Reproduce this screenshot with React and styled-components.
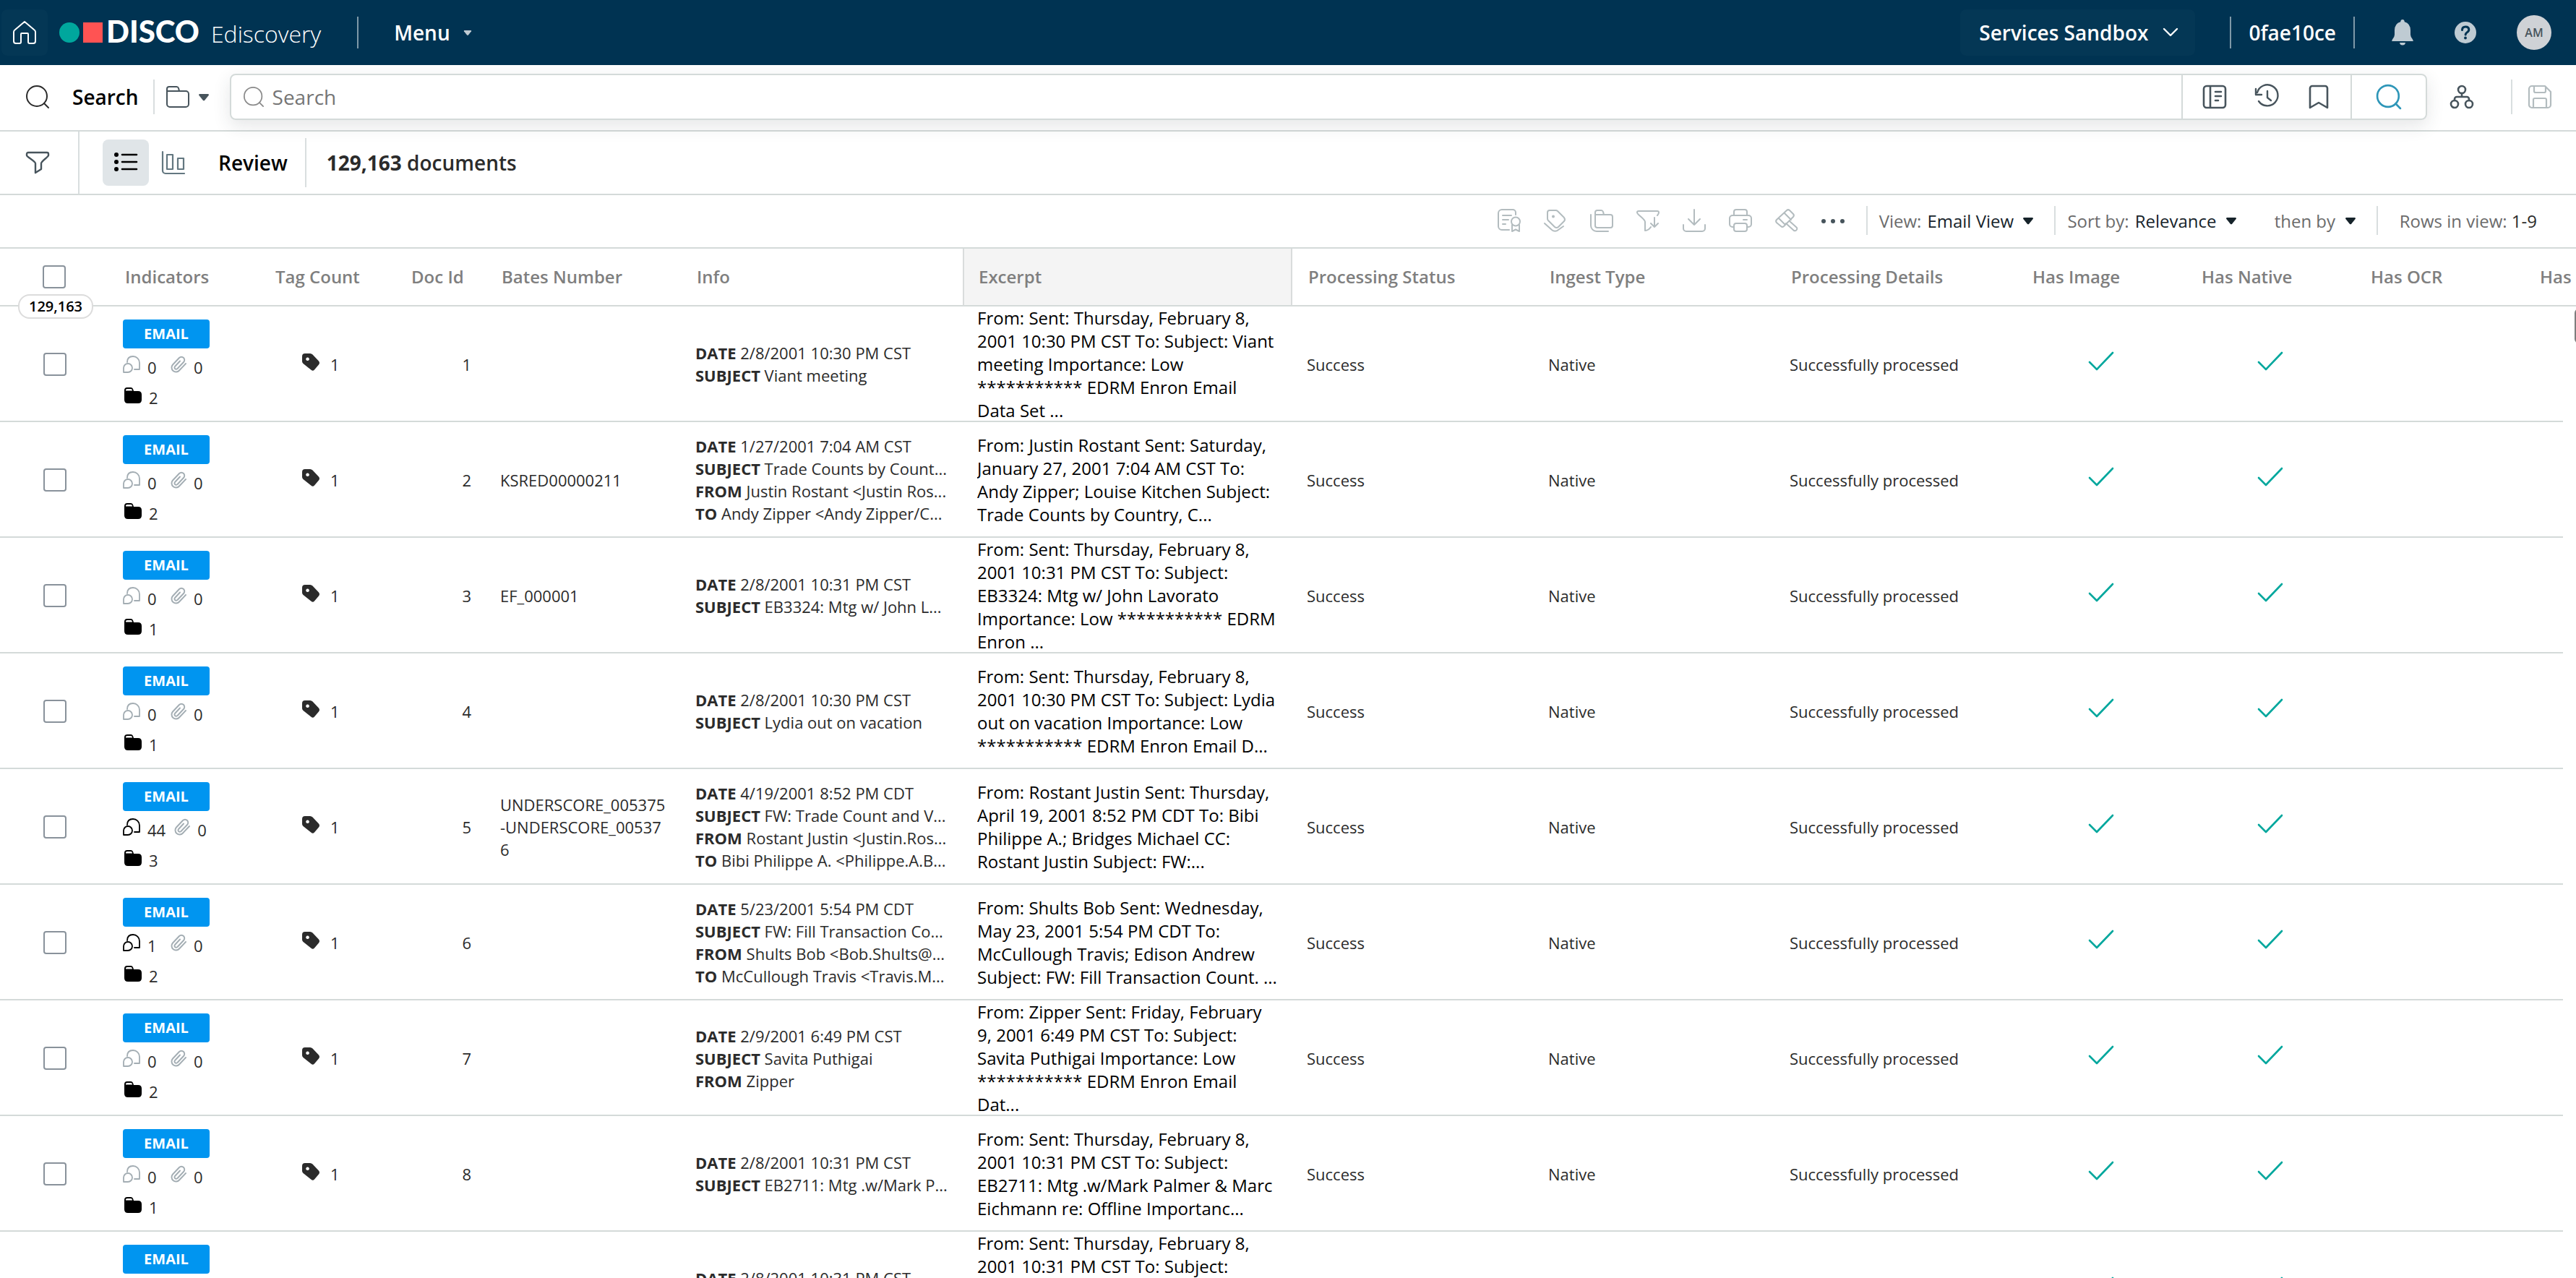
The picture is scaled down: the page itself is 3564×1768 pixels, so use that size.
import React, { useState } from "react";
import styled, { createGlobalStyle, css } from "styled-components";

const documents = [
    {
        id: 1, bates: "", threads: 0, attachments: 0, folders: 2,
        info: [["DATE", "2/8/2001 10:30 PM CST"], ["SUBJECT", "Viant meeting"]],
        excerpt: "From: Sent: Thursday, February 8, 2001 10:30 PM CST To: Subject: Viant meeting Importance: Low *********** EDRM Enron Email Data Set ...",
    },
    {
        id: 2, bates: "KSRED00000211", threads: 0, attachments: 0, folders: 2,
        info: [["DATE", "1/27/2001 7:04 AM CST"], ["SUBJECT", "Trade Counts by Count..."], ["FROM", "Justin Rostant <Justin Ros..."], ["TO", "Andy Zipper <Andy Zipper/C..."]],
        excerpt: "From: Justin Rostant Sent: Saturday, January 27, 2001 7:04 AM CST To: Andy Zipper; Louise Kitchen Subject: Trade Counts by Country, C...",
    },
    {
        id: 3, bates: "EF_000001", threads: 0, attachments: 0, folders: 1,
        info: [["DATE", "2/8/2001 10:31 PM CST"], ["SUBJECT", "EB3324: Mtg w/ John L..."]],
        excerpt: "From: Sent: Thursday, February 8, 2001 10:31 PM CST To: Subject: EB3324: Mtg w/ John Lavorato Importance: Low *********** EDRM Enron ...",
    },
    {
        id: 4, bates: "", threads: 0, attachments: 0, folders: 1,
        info: [["DATE", "2/8/2001 10:30 PM CST"], ["SUBJECT", "Lydia out on vacation"]],
        excerpt: "From: Sent: Thursday, February 8, 2001 10:30 PM CST To: Subject: Lydia out on vacation Importance: Low *********** EDRM Enron Email D...",
    },
    {
        id: 5, bates: "UNDERSCORE_005375-UNDERSCORE_005376", threads: 44, attachments: 0, folders: 3,
        info: [["DATE", "4/19/2001 8:52 PM CDT"], ["SUBJECT", "FW: Trade Count and V..."], ["FROM", "Rostant Justin <Justin.Ros..."], ["TO", "Bibi Philippe A. <Philippe.A.B..."]],
        excerpt: "From: Rostant Justin Sent: Thursday, April 19, 2001 8:52 PM CDT To: Bibi Philippe A.; Bridges Michael CC: Rostant Justin Subject: FW:...",
    },
    {
        id: 6, bates: "", threads: 1, attachments: 0, folders: 2,
        info: [["DATE", "5/23/2001 5:54 PM CDT"], ["SUBJECT", "FW: Fill Transaction Co..."], ["FROM", "Shults Bob <Bob.Shults@..."], ["TO", "McCullough Travis <Travis.M..."]],
        excerpt: "From: Shults Bob Sent: Wednesday, May 23, 2001 5:54 PM CDT To: McCullough Travis; Edison Andrew Subject: FW: Fill Transaction Count. ...",
    },
    {
        id: 7, bates: "", threads: 0, attachments: 0, folders: 2,
        info: [["DATE", "2/9/2001 6:49 PM CST"], ["SUBJECT", "Savita Puthigai"], ["FROM", "Zipper"]],
        excerpt: "From: Zipper Sent: Friday, February 9, 2001 6:49 PM CST To: Subject: Savita Puthigai Importance: Low *********** EDRM Enron Email Dat...",
    },
    {
        id: 8, bates: "", threads: 0, attachments: 0, folders: 1,
        info: [["DATE", "2/8/2001 10:31 PM CST"], ["SUBJECT", "EB2711: Mtg .w/Mark P..."]],
        excerpt: "From: Sent: Thursday, February 8, 2001 10:31 PM CST To: Subject: EB2711: Mtg .w/Mark Palmer & Marc Eichmann re: Offline Importanc...",
    },
    {
        id: 9, bates: "", threads: 0, attachments: 0, folders: 1,
        info: [["DATE", "2/8/2001 10:31 PM CST"], ["SUBJECT", "EB3324: Mtg w/ John L..."]],
        excerpt: "From: Sent: Thursday, February 8, 2001 10:31 PM CST To: Subject: EB3324: Mtg w/ John Lavorato Importance: Low *********** EDRM Enron ...",
    },
];

const columns = [
    { label: "Indicators", width: 208 },
    { label: "Tag Count", width: 188 },
    { label: "Doc Id", width: 125 },
    { label: "Bates Number", width: 270 },
    { label: "Info", width: 390 },
    { label: "Excerpt", width: 456, active: true },
    { label: "Processing Status", width: 334 },
    { label: "Ingest Type", width: 334 },
    { label: "Processing Details", width: 334 },
    { label: "Has Image", width: 234 },
    { label: "Has Native", width: 234 },
    { label: "Has OCR", width: 234 },
];

/* icons */

const Svg = ({ size = 32, w, h, children, stroke = 2, ...rest }) => (
    <svg
        width={w || size}
        height={h || size}
        viewBox={`0 0 ${w || 32} ${h || 32}`}
        fill="none"
        stroke="currentColor"
        strokeWidth={stroke}
        strokeLinecap="round"
        strokeLinejoin="round"
        overflow="visible"
        aria-hidden="true"
        {...rest}
    >
        {children}
    </svg>
);

const HomeIcon = () => (
    <Svg stroke={2}>
        <path d="M16 1 3 12a4 4 0 0 0-2 3v13a3 3 0 0 0 3 3h5a2 2 0 0 0 2-2V18a1 1 0 0 1 1-1h8a1 1 0 0 1 1 1v11a2 2 0 0 0 2 2h5a3 3 0 0 0 3-3V15a4 4 0 0 0-2-3Z" />
    </Svg>
);
const SearchIcon = ({ size, stroke }) => (
    <Svg size={size} stroke={stroke}>
        <circle cx="15" cy="15" r="14" />
        <path d="m25 25 6 6" />
    </Svg>
);
const FolderIcon = () => (
    <Svg>
        <path d="M1 8V5a3 3 0 0 1 3-3h10a3 3 0 0 1 3 2l1 4h9a4 4 0 0 1 4 4v14a4 4 0 0 1-4 4H5a4 4 0 0 1-4-4V8h17" />
    </Svg>
);
const ReadingIcon = () => (
    <Svg stroke={2.6}>
        <rect x="1" y="1" width="30" height="30" rx="4" />
        <path d="M10 2v28M17 9h8M17 15h8M17 21h4" />
    </Svg>
);
const HistoryIcon = () => (
    <Svg stroke={2.4}>
        <path d="M3 10a14.500 14.500 0 1 1 2 12" />
        <path d="M1 5v8h8M17 8v9l5 4" />
    </Svg>
);
const BookmarkIcon = () => (
    <Svg stroke={2.6}>
        <path d="M4 31V4a3 3 0 0 1 3-3h18a3 3 0 0 1 3 3v27l-12-7Z" />
    </Svg>
);
const NetworkIcon = () => (
    <Svg stroke={2.6}>
        <circle cx="16" cy="6" r="5" />
        <circle cx="6" cy="26" r="5" />
        <circle cx="26" cy="26" r="5" />
        <path d="M16 11v5M6 21v-2a3 3 0 0 1 3-3h14a3 3 0 0 1 3 3v2" />
    </Svg>
);
const SaveIcon = () => (
    <Svg stroke={2.2}>
        <path d="M5 1h18l8 8v18a4 4 0 0 1-4 4H5a4 4 0 0 1-4-4V5a4 4 0 0 1 4-4Z" />
        <path d="M8 2v6a2 2 0 0 0 2 2h12a2 2 0 0 0 2-2V2M7 31V20a2 2 0 0 1 2-2h14a2 2 0 0 1 2 2v11" />
    </Svg>
);
const FilterIcon = () => (
    <Svg stroke={2.4}>
        <path d="M3 2h26a2 2 0 0 1 2 2v2c0 2-10 8-10 11v8l-8 5V17C13 14 1 8 1 6V4a2 2 0 0 1 2-2Z" />
    </Svg>
);
const ListIcon = () => (
    <Svg stroke={2.6}>
        <path d="M11 5h20M11 15h20M11 25h20" />
        <g fill="currentColor" stroke="none">
            <circle cx="3" cy="5" r="3" />
            <circle cx="3" cy="15" r="3" />
            <circle cx="3" cy="25" r="3" />
        </g>
    </Svg>
);
const ChartIcon = () => (
    <Svg stroke={2.2}>
        <path d="M1 1v26a4 4 0 0 0 4 4h26" />
        <path d="M7 5h8v20H7ZM22 10h8v15h-8Z" />
    </Svg>
);
const NoteRibbonIcon = () => (
    <Svg>
        <path d="M16 29H6a5 5 0 0 1-5-5V6a5 5 0 0 1 5-5h15a4 4 0 0 1 4 4v3M7 9h12M7 15h8M7 21h4" />
        <circle cx="25" cy="17.500" r="6" />
        <path d="M20 22v9l5-2.500 5 2.500v-9" />
    </Svg>
);
const TagsIcon = () => (
    <Svg>
        <path d="M5 5a3 3 0 0 1 3-3h8a4 4 0 0 1 3 1l9 9a4 4 0 0 1 0 5l-8 8a4 4 0 0 1-5 0L6 16a4 4 0 0 1-1-3Z" />
        <path d="m1 20 10 9a7 7 0 0 0 9 0l7-5" />
        <circle cx="13" cy="10.500" r="1" fill="currentColor" />
    </Svg>
);
const FoldersIcon = () => (
    <Svg>
        <path d="M7 8V5a3 3 0 0 1 3-3h5a3 3 0 0 1 3 2l1 4h9a3 3 0 0 1 3 3v12a3 3 0 0 1-3 3H10a3 3 0 0 1-3-3V8h12" />
        <path d="M1 8v15a8 8 0 0 0 8 8h16" />
    </Svg>
);
const FilterDownIcon = () => (
    <Svg>
        <path d="M29 9c2-2 2-3 2-4a2 2 0 0 0-2-2H3a2 2 0 0 0-2 2c0 3 11 9 11 13v12c3 0 6-2 8-5" />
        <path d="M25 12v13M20 20l5 5 5-5" />
    </Svg>
);
const DownloadIcon = () => (
    <Svg>
        <path d="M16 1v21M8 14l8 8 8-8M1 22v5a4 4 0 0 0 4 4h22a4 4 0 0 0 4-4v-5" />
    </Svg>
);
const PrinterIcon = () => (
    <Svg>
        <path d="M7 9V4a3 3 0 0 1 3-3h12a3 3 0 0 1 3 3v5M7 25H5a4 4 0 0 1-4-4v-8a4 4 0 0 1 4-4h22a4 4 0 0 1 4 4v8a4 4 0 0 1-4 4h-2M20 15h5" />
        <rect x="7" y="20" width="18" height="11" rx="3" />
    </Svg>
);
const GavelIcon = () => (
    <Svg>
        <path d="M16 2a3 3 0 0 1 4 0l5 5a3 3 0 0 1 0 4L12 24a3 3 0 0 1-4 0l-6-5a3 3 0 0 1 0-4ZM13 6l9 9M5 13l9 9" />
        <path d="m20 17 10 9a3 3 0 0 1-4 4L15 20" />
    </Svg>
);
const MoreIcon = () => (
    <Svg>
        <g fill="currentColor" stroke="none">
            <circle cx="3" cy="17" r="3" />
            <circle cx="16" cy="17" r="3" />
            <circle cx="29" cy="17" r="3" />
        </g>
    </Svg>
);
const Caret = ({ size = 16 }) => (
    <svg width={size} height={size} viewBox="0 0 16 16" aria-hidden="true">
        <path d="M2 4h12q1.500.5.8 1.800l-5.600 7q-1.200 1-2.400 0l-5.600-7Q.5 4.500 2 4Z" fill="currentColor" />
    </svg>
);
const ThreadIcon = () => (
    <Svg w={24} h={24} stroke={1.8}>
        <path d="M6 9C6 4 9 1 14 1s9 4 9 9v9h-7" />
        <path d="M1 23v-6a6 6 0 1 1 6 6Z" />
    </Svg>
);
const ClipIcon = () => (
    <Svg w={22} h={24} stroke={1.9}>
        <path d="m21 11-9 9.500a6 6 0 0 1-9-8l9-9.500a4 4 0 0 1 6 6L9.500 18a2 2 0 0 1-3.500-3l7-7.500" />
    </Svg>
);
const SolidFolderIcon = () => (
    <svg width="26" height="24" viewBox="0 0 26 24" aria-hidden="true">
        <path d="M6 2h5q2 0 3 2l1 3h6q5 0 5 5v7q0 5-5 5H7q-5 0-5-5V6q0-4 4-4Z" />
        <path d="M4 6.500V5.500Q4 4 6 4h5q1.200 0 1.600 1l.4 1.500Z" fill="#fff" />
    </svg>
);
const TagIcon = () => (
    <svg width="24" height="24" viewBox="0 0 24 24" aria-hidden="true">
        <path fillRule="evenodd" fill="#2b2b2b" d="M4 0h7q2 0 3.500 1.500l8.500 9q2 2.500 0 5l-6 7q-2 2.500-4.500.3L1.500 14Q0 12.500 0 11V4q0-4 4-4Zm3.500 5.500a2.300 2.300 0 1 0 .1 0Z" />
    </svg>
);
const CheckIcon = () => (
    <Svg w={36} h={28} stroke={2.6}>
        <path d="m2 15 10 10L34 2" />
    </Svg>
);
const BellIcon = () => (
    <svg width="30" height="36" viewBox="0 0 30 36" fill="currentColor" aria-hidden="true">
        <path d="M15 0q2.500 0 2.800 3.200Q26 5.500 26 15v6q0 3 3 6.500.8 1.500.8 2.500H.2q0-1 .8-2.500 3-3.500 3-6.500v-6Q4 5.500 12.200 3.200 12.500 0 15 0ZM11 32h8q-.5 3.500-4 3.500T11 32Z" />
    </svg>
);
const HelpIcon = () => (
    <svg width="30" height="30" viewBox="0 0 30 30" aria-hidden="true">
        <circle cx="15" cy="15" r="15" fill="currentColor" />
        <path d="M10.500 11.500q0-4.500 4.700-4.500 4.600 0 4.600 4 0 2.300-2.500 3.800-2 1.200-2.200 3.200" fill="none" stroke="#003352" strokeWidth="3" strokeLinecap="round" />
        <circle cx="15" cy="22.500" r="1.900" fill="#003352" />
    </svg>
);

export default function App() {
    const [selected, setSelected] = useState([]);
    const allSelected = selected.length === documents.length;
    const toggle = (id) => {
        setSelected(selected.includes(id) ? selected.filter((s) => s !== id) : [...selected, id]);
    };

    return (
        <Page>
            <GlobalStyle />
            <TopBar>
                <HomeButton href="#home" aria-label="Home"><HomeIcon /></HomeButton>
                <Logo href="#disco">
                    <svg width="60" height="28" viewBox="0 0 60 28" aria-hidden="true">
                        <circle cx="14" cy="14" r="14" fill="#00a79d" />
                        <path d="M33 0h27v28H33Z" fill="#ff5353" />
                    </svg>
                    <strong>DISCO</strong>
                    <span>Ediscovery</span>
                </Logo>
                <Divider $height={44} $dark />
                <MenuButton>Menu <Caret size={12} /></MenuButton>
                <Spacer />
                <SandboxButton>
                    Services Sandbox
                    <Svg w={22} h={12} stroke={2.400}><path d="m2 1 9 9 9-9" /></Svg>
                </SandboxButton>
                <Divider $height={44} $dark />
                <Account>0fae10ce</Account>
                <Divider $height={44} $dark />
                <TopIcons>
                    <IconButton aria-label="Notifications" $color="#bfcbd3"><BellIcon /></IconButton>
                    <IconButton aria-label="Help" $color="#bfcbd3"><HelpIcon /></IconButton>
                    <Avatar>AM</Avatar>
                </TopIcons>
            </TopBar>

            <SearchRow>
                <SearchIcon />
                <Title>Search</Title>
                <Divider $height={48} />
                <FolderButton aria-label="Search scope"><FolderIcon /><Caret /></FolderButton>
                <SearchBox>
                    <SearchField>
                        <SearchIcon size={28} />
                        <input type="text" placeholder="Search" aria-label="Search documents" />
                    </SearchField>
                    <SearchTools>
                        <IconButton aria-label="Search builder"><ReadingIcon /></IconButton>
                        <IconButton aria-label="History"><HistoryIcon /></IconButton>
                        <IconButton aria-label="Saved searches"><BookmarkIcon /></IconButton>
                    </SearchTools>
                    <SubmitButton aria-label="Run search"><SearchIcon size={34} stroke={2.500} /></SubmitButton>
                </SearchBox>
                <NetworkButton aria-label="Search visualizer"><NetworkIcon /></NetworkButton>
                <Divider $height={48} />
                <SaveButton aria-label="Save search" $color="#b3bcbf"><SaveIcon /></SaveButton>
            </SearchRow>

            <ViewRow>
                <FilterButton aria-label="Filters"><FilterIcon /></FilterButton>
                <ViewTabs>
                    <TabButton aria-label="List" $active><ListIcon /></TabButton>
                    <TabButton aria-label="Charts"><ChartIcon /></TabButton>
                </ViewTabs>
                <ReviewLink href="#review">Review</ReviewLink>
                <Divider $height={68} />
                <DocCount><b>129,163</b> documents</DocCount>
            </ViewRow>

            <ActionRow>
                <Actions>
                    <IconButton aria-label="Notes" $color="#b3bcbf"><NoteRibbonIcon /></IconButton>
                    <IconButton aria-label="Tag" $color="#b3bcbf"><TagsIcon /></IconButton>
                    <IconButton aria-label="Folder" $color="#b3bcbf"><FoldersIcon /></IconButton>
                    <IconButton aria-label="Include" $color="#b3bcbf"><FilterDownIcon /></IconButton>
                    <IconButton aria-label="Download" $color="#b3bcbf"><DownloadIcon /></IconButton>
                    <IconButton aria-label="Print" $color="#b3bcbf"><PrinterIcon /></IconButton>
                    <IconButton aria-label="Productions" $color="#b3bcbf"><GavelIcon /></IconButton>
                    <IconButton aria-label="More actions"><MoreIcon /></IconButton>
                </Actions>
                <Divider $height={40} />
                <Picker>
                    View:
                    <select><option>Email View</option></select>
                    <Caret />
                </Picker>
                <Divider $height={40} />
                <Picker>
                    Sort by:
                    <select><option>Relevance</option></select>
                    <Caret />
                </Picker>
                <Picker $muted>
                    <select aria-label="Second sort"><option>then by</option></select>
                    <Caret />
                </Picker>
                <Divider $height={40} />
                <RowRange>Rows in view: <b>1-9</b></RowRange>
            </ActionRow>

            <Results>
                <Table>
                    <colgroup>
                        <Col $width={151} />
                        {columns.map((c) => <Col key={c.label} $width={c.width} />)}
                        <col />
                        <Col $width={18} />
                    </colgroup>
                    <thead>
                        <tr>
                            <SelectHead>
                                <Checkbox
                                    aria-label="Select all"
                                    checked={allSelected}
                                    onChange={() => setSelected(allSelected ? [] : documents.map((d) => d.id))}
                                />
                                <TotalBadge>129,163</TotalBadge>
                            </SelectHead>
                            {columns.map((c) => <HeadCell key={c.label} $active={c.active}>{c.label}</HeadCell>)}
                            <HeadCell colSpan={2}>Has</HeadCell>
                        </tr>
                    </thead>
                    <tbody>
                        {documents.map((doc) => (
                            <DocumentRow
                                key={doc.id}
                                data={doc}
                                checked={selected.includes(doc.id)}
                                onToggle={() => toggle(doc.id)}
                            />
                        ))}
                    </tbody>
                </Table>
                <ScrollThumb />
            </Results>
        </Page>
    );
}

function DocumentRow({ data: doc, checked, onToggle }) {
    return (
        <tr>
            <SelectCell>
                <Checkbox aria-label={`Select document ${doc.id}`} checked={checked} onChange={onToggle} />
            </SelectCell>
            <IndicatorCell>
                <TypeBadge>EMAIL</TypeBadge>
                <Counts>
                    <Count $active={doc.threads > 0}><ThreadIcon /><span>{doc.threads}</span></Count>
                    <Count $active={doc.attachments > 0}><ClipIcon /><span>{doc.attachments}</span></Count>
                </Counts>
                <Count $active><SolidFolderIcon /><span>{doc.folders}</span></Count>
            </IndicatorCell>
            <Cell>
                <TagCount><TagIcon />1</TagCount>
            </Cell>
            <Cell $align="right">{doc.id}</Cell>
            <Cell $break>{doc.bates}</Cell>
            <Cell>
                {doc.info.map(([label, value]) => (
                    <InfoLine key={label}><b>{label}</b> {value}</InfoLine>
                ))}
            </Cell>
            <Cell><Excerpt>{doc.excerpt}</Excerpt></Cell>
            <Cell>Success</Cell>
            <Cell>Native</Cell>
            <Cell>Successfully processed</Cell>
            <Cell $align="center"><Mark><CheckIcon /></Mark></Cell>
            <Cell $align="center"><Mark><CheckIcon /></Mark></Cell>
            <Cell />
            <Cell />
            <td />
        </tr>
    );
}

const GlobalStyle = createGlobalStyle`
    * { box-sizing: border-box; }
    body {
        margin: 0;
        background: #fff;
        color: #2b2b2b;
        font-family: "Open Sans", "Noto Sans", sans-serif;
        font-size: 22px;
    }
    button, input, select {
        font: inherit;
        color: inherit;
        border: 0;
        padding: 0;
        margin: 0;
        background: none;
        outline: none;
    }
    button, select { cursor: pointer; }
    a { color: inherit; text-decoration: none; }
    svg { display: block; flex: none; }
`;

const line = "#d4dad9";

const Page = styled.div`
    display: flex;
    flex-direction: column;
    height: 100vh;
    overflow: hidden;
`;

const Spacer = styled.div`
    flex: 1;
`;

const Divider = styled.div`
    flex: none;
    width: 2px;
    height: ${(p) => p.$height}px;
    background: ${(p) => (p.$dark ? "#7f99a8" : "#d9dedf")};
`;

const IconButton = styled.button`
    display: flex;
    align-items: center;
    justify-content: center;
    min-width: 32px;
    height: 32px;
    color: ${(p) => p.$color || "#47545c"};
`;

const TopBar = styled.header`
    display: flex;
    align-items: center;
    flex: none;
    height: 90px;
    padding: 0 34px 0 2px;
    background: #003352;
    color: #fff;
    font-size: 28px;
`;

const HomeButton = styled.a`
    display: flex;
    align-items: center;
    justify-content: center;
    width: 64px;
    height: 64px;
    border-radius: 8px;
    background: #043755;
`;

const Logo = styled.a`
    display: flex;
    align-items: baseline;
    margin: 0 50px 0 16px;
    line-height: 48px;

    strong {
        margin: 0 16px 0 5px;
        font-family: Lato, sans-serif;
        font-size: 42px;
        font-weight: 900;
    }

    span {
        font-size: 32px;
        font-weight: 300;
    }
`;

const MenuButton = styled.button`
    display: flex;
    align-items: center;
    gap: 18px;
    margin-left: 49px;
    font-weight: 600;

    svg { color: #bfcbd3; }
`;

const SandboxButton = styled.button`
    display: flex;
    align-items: center;
    gap: 20px;
    height: 64px;
    margin-right: 48px;
    padding: 0 23px 0 26px;
    border-radius: 8px;
    background: #043755;
    font-weight: 600;
`;

const Account = styled.span`
    padding: 0 24px;
    font-weight: 600;
`;

const TopIcons = styled.div`
    display: flex;
    align-items: center;
    gap: 55px;
    margin-left: 50px;
`;

const Avatar = styled.button`
    width: 48px;
    height: 48px;
    border-radius: 50%;
    background: #cfd2d6;
    color: #47545c;
    font-size: 16px;
    font-weight: 600;
`;

const SearchRow = styled.div`
    display: flex;
    align-items: center;
    flex: none;
    height: 92px;
    padding: 0 34px 2px 36px;
    border-bottom: 2px solid ${line};
    font-size: 28px;
`;

const Title = styled.h1`
    margin: 0 20px 0 32px;
    color: #000;
    font-size: 28px;
    font-weight: 600;
`;

const FolderButton = styled.button`
    display: flex;
    align-items: center;
    gap: 12px;
    margin: 0 28px 0 16px;
    color: #47545c;
`;

const SearchBox = styled.div`
    display: flex;
    flex: 1;
    height: 64px;
    border: 2px solid ${line};
    border-radius: 8px;
    box-shadow: 0 8px 24px rgba(40, 50, 60, 0.12);
`;

const SearchField = styled.div`
    display: flex;
    align-items: center;
    flex: 1;
    gap: 12px;
    padding-left: 17px;
    color: #8a8a8a;

    input {
        flex: 1;
        height: 100%;
        color: #2b2b2b;
    }

    input::placeholder { color: #757575; }
`;

const SearchTools = styled.div`
    display: flex;
    align-items: center;
    gap: 40px;
    padding: 0 28px;
    border-left: 2px solid ${line};
`;

const SubmitButton = styled.button`
    display: flex;
    align-items: center;
    justify-content: center;
    width: 104px;
    border-left: 2px solid ${line};
    color: #2e96b8;
`;

const NetworkButton = styled(IconButton)`
    margin: 0 52px 0 32px;
`;

const SaveButton = styled(IconButton)`
    margin-left: 22px;
`;

const ViewRow = styled.div`
    display: flex;
    align-items: center;
    flex: none;
    height: 88px;
    border-bottom: 2px solid ${line};
    font-size: 28px;
`;

const FilterButton = styled.button`
    align-self: stretch;
    width: 110px;
    padding-left: 36px;
    border-right: 2px solid #d9dedf;
    color: #47545c;
`;

const ViewTabs = styled.div`
    display: flex;
    gap: 2px;
    margin: 0 30px 0 32px;
`;

const TabButton = styled.button`
    display: flex;
    align-items: center;
    justify-content: center;
    width: 64px;
    height: 64px;
    border-radius: 8px;
    color: #637780;

    ${(p) => p.$active && css`
        background: #e0e5e8;
        color: #000;
    `}
`;

const ReviewLink = styled.a`
    margin-right: 24px;
    color: #000;
    font-weight: 600;
`;

const DocCount = styled.div`
    margin-left: 28px;
    font-weight: 600;

    b { font-weight: 700; }
`;

const ActionRow = styled.div`
    display: flex;
    align-items: center;
    justify-content: flex-end;
    flex: none;
    height: 74px;
    padding: 0 54px 2px 0;
    border-bottom: 2px solid ${line};
    color: #6b6b6b;
    font-size: 24px;
`;

const Actions = styled.div`
    display: flex;
    gap: 32px;
    margin-right: 30px;
`;

const Picker = styled.label`
    display: flex;
    align-items: center;
    margin: 0 28px 0 16px;

    select {
        appearance: none;
        margin: 0 12px 0 8px;
        color: ${(p) => (p.$muted ? "#6b6b6b" : "#16232a")};
    }

    svg { color: #16232a; }
`;

const RowRange = styled.div`
    margin-left: 30px;

    b {
        color: #2b2b2b;
        font-weight: 400;
    }
`;

const Results = styled.main`
    position: relative;
    flex: 1;
    min-height: 0;
    overflow: hidden;
`;

const Table = styled.table`
    width: 100%;
    border-collapse: separate;
    border-spacing: 0;
    table-layout: fixed;
`;

const Col = styled.col`
    width: ${(p) => p.$width}px;
`;

const HeadCell = styled.th`
    height: 80px;
    padding: 0 0 2px 22px;
    border-bottom: 2px solid ${line};
    color: #7f7f7f;
    font-size: 24px;
    font-weight: 600;
    text-align: left;
    white-space: nowrap;

    ${(p) => p.$active && css`
        padding-left: 20px;
        border-left: 2px solid #d9dcdc;
        border-right: 2px solid #d9dcdc;
        background: #f4f4f4;
    `}
`;

const SelectHead = styled(HeadCell)`
    position: relative;
    padding: 0 0 0 59px;
`;

const TotalBadge = styled.span`
    position: absolute;
    bottom: -19px;
    left: 25px;
    padding: 0 13px;
    border: 2px solid #dcdcdc;
    border-radius: 16px;
    background: #fff;
    color: #000;
    font-size: 20px;
    font-weight: 600;
    line-height: 30px;
`;

const Checkbox = styled.input.attrs({ type: "checkbox" })`
    display: block;
    appearance: none;
    width: 32px;
    height: 32px;
    border: 2px solid #89929b;
    border-radius: 4px;
    background: #fff;

    &:checked { background: #0095f0; }
`;

const Cell = styled.td`
    height: 160px;
    padding: 0 20px;
    box-shadow: inset 0 -2px 0 ${line};
    line-height: 31px;
    text-align: ${(p) => p.$align || "left"};
    vertical-align: middle;
    word-break: ${(p) => (p.$break ? "break-all" : "normal")};
`;

const SelectCell = styled(Cell)`
    padding: 0 0 0 60px;
`;

const IndicatorCell = styled(Cell)`
    padding: 18px 0 0 19px;
    vertical-align: top;
`;

const TypeBadge = styled.div`
    width: 120px;
    margin-bottom: 10px;
    border-radius: 4px;
    background: #0095f0;
    color: #fff;
    font-size: 20px;
    font-weight: 700;
    line-height: 40px;
    text-align: center;
`;

const Counts = styled.div`
    display: flex;
    gap: 12px;
    margin-bottom: 10px;
`;

const Count = styled.div`
    display: flex;
    gap: 10px;
    color: ${(p) => (p.$active ? "#000" : "#a3adb3")};

    span {
        min-width: 20px;
        color: #2b2b2b;
        line-height: 32px;
    }
`;

const TagCount = styled.div`
    display: flex;
    gap: 15px;
    padding-left: 39px;
`;

const InfoLine = styled.div`
    overflow: hidden;
    white-space: nowrap;
`;

const Excerpt = styled.div`
    max-height: 160px;
    overflow: hidden;
    color: #000;
    font-size: 24px;
    line-height: 32px;
`;

const Mark = styled.span`
    display: flex;
    justify-content: center;
    padding-bottom: 8px;
    color: #00a79d;
`;

const ScrollThumb = styled.div`
    position: absolute;
    top: 83px;
    right: -10px;
    width: 12px;
    height: 48px;
    border-radius: 6px;
    background: #7d7d7d;
`;
